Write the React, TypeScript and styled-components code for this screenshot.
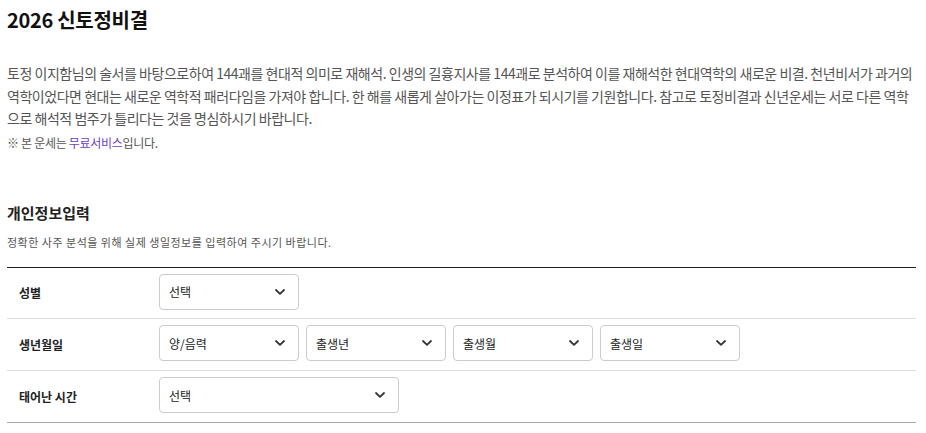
import React, { FC } from 'react';
import styled, { createGlobalStyle } from 'styled-components';

const FONT = `'Noto Sans CJK KR', 'Noto Sans', sans-serif`;

const GlobalStyle = createGlobalStyle`
  body {
    margin: 0;
    background: #fff;
    font-family: ${FONT};
    color: #222;
  }
`;

const Page = styled.div`
  width: 909px;
  margin-left: 7px;
`;

const Title = styled.h2`
  margin: 0;
  padding-top: 8px;
  font-size: 20px;
  line-height: 24px;
  font-weight: 700;
  color: #111;
  letter-spacing: -0.3px;
`;

const Intro = styled.p`
  margin: 30px 0 0;
  font-size: 14px;
  line-height: 22.5px;
  color: #555;
  letter-spacing: -0.47px;
`;

const Note = styled.p`
  margin: 4px 0 0;
  font-size: 12px;
  line-height: 18px;
  color: #555;
  letter-spacing: -0.3px;

  a {
    color: #6b3fc4;
    text-decoration: none;
  }
`;

const SectionTitle = styled.h3`
  margin: 51px 0 0;
  font-size: 15px;
  line-height: 20px;
  font-weight: 700;
  color: #222;
`;

const SectionDesc = styled.p`
  margin: 11px 0 0;
  font-size: 11px;
  line-height: 16px;
  color: #555;
  letter-spacing: 0.5px;
`;

const Table = styled.div`
  margin-top: 17px;
  border-top: 1px solid #222;
  border-bottom: 1px solid #aaa;
`;

const Row = styled.div`
  display: grid;
  grid-template-columns: 152px 1fr;
  align-items: center;
  height: 51px;

  &:first-child {
    height: 50px;
  }

  & + & {
    border-top: 1px solid #ddd;
  }
`;

const Label = styled.div`
  padding-left: 12px;
  font-size: 12px;
  font-weight: 700;
  color: #222;
`;

const Fields = styled.div`
  display: flex;
  gap: 7px;
`;

const SelectBox = styled.div<{ $width: number }>`
  box-sizing: border-box;
  width: ${(p) => p.$width}px;
  height: 36px;
  margin-top: -2px;
  border: 1px solid #ccc;
  border-radius: 4px;
  display: flex;
  align-items: center;
  justify-content: space-between;
  padding: 0 13px 0 9px;
  font-size: 12px;
  color: #222;
  background: #fff;
`;

const Chevron: FC = () => (
  <svg width="10" height="6" viewBox="0 0 10 6" fill="none">
    <path d="M1 1L5 4.8L9 1" stroke="#333" strokeWidth="1.8" strokeLinecap="round" strokeLinejoin="round" />
  </svg>
);

const Select: FC<{ placeholder: string; width?: number }> = ({ placeholder, width = 140 }) => (
  <SelectBox $width={width}>
    <span>{placeholder}</span>
    <Chevron />
  </SelectBox>
);

export default function App() {
  return (
    <Page>
      <GlobalStyle />
      <Title>2026 신토정비결</Title>
      <Intro>
        토정 이지함님의 술서를 바탕으로하여 144괘를 현대적 의미로 재해석. 인생의 길흉지사를 144괘로 분석하여 이를
        재해석한 현대역학의 새로운 비결. 천년비서가 과거의 역학이었다면 현대는 새로운 역학적 패러다임을 가져야
        합니다. 한 해를 새롭게 살아가는 이정표가 되시기를 기원합니다. 참고로 토정비결과 신년운세는 서로 다른 역학으로
        해석적 범주가 틀리다는 것을 명심하시기 바랍니다.
      </Intro>
      <Note>
        ※ 본 운세는 <a href="#">무료서비스</a>입니다.
      </Note>

      <SectionTitle>개인정보입력</SectionTitle>
      <SectionDesc>정확한 사주 분석을 위해 실제 생일정보를 입력하여 주시기 바랍니다.</SectionDesc>

      <Table>
        <Row>
          <Label>성별</Label>
          <Fields>
            <Select placeholder="선택" />
          </Fields>
        </Row>
        <Row>
          <Label>생년월일</Label>
          <Fields>
            <Select placeholder="양/음력" />
            <Select placeholder="출생년" />
            <Select placeholder="출생월" />
            <Select placeholder="출생일" />
          </Fields>
        </Row>
        <Row>
          <Label>태어난 시간</Label>
          <Fields>
            <Select placeholder="선택" width={240} />
          </Fields>
        </Row>
      </Table>
    </Page>
  );
}
